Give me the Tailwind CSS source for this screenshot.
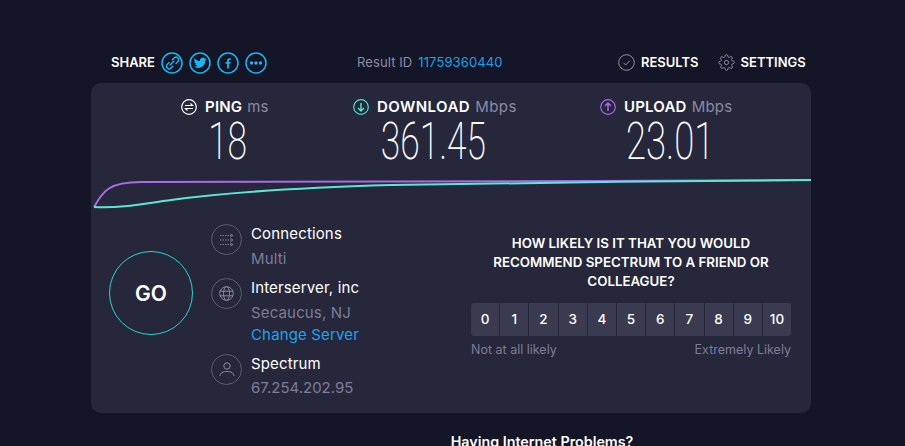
<!DOCTYPE html>
<html lang="en">
<head>
  <meta charset="UTF-8" />
  <meta name="viewport" content="width=device-width, initial-scale=1.0" />
  <title>Speedtest Result</title>
  <script src="https://cdn.jsdelivr.net/npm/@tailwindcss/browser@4"></script>
</head>
<body class="bg-[#141526] font-['Inter',sans-serif] text-white h-[446px] overflow-hidden">

  <main class="w-[720px] ml-[91px]">
    <!-- Top bar -->
    <div class="h-[83px] pt-[47px] flex items-start text-[13px]">
      <div class="w-[266px] pl-[20px] h-[31px] flex items-center">
        <span class="font-semibold mr-[6px]">SHARE</span>
        <div class="flex gap-[6px] text-[#1cb5ee]">
          <svg class="w-[22px] h-[22px]" viewBox="0 0 22 22" fill="none" stroke="currentColor" stroke-width="1.5"><circle cx="11" cy="11" r="10"/><path transform="translate(11 11) scale(1.2) translate(-11 -11)" d="M9.5 12.5l3-3M8.6 10.6l-1.6 1.6a2.2 2.2 0 0 0 3.1 3.1l1.6-1.6M11.3 8.300l1.6-1.6a2.2 2.2 0 0 1 3.1 3.1l-1.6 1.6" stroke-linecap="round" stroke-width="1.200"/></svg>
          <svg class="w-[22px] h-[22px]" viewBox="0 0 22 22" fill="none" stroke="currentColor" stroke-width="1.5"><circle cx="11" cy="11" r="10"/><path transform="translate(11 11) scale(1.2) translate(-11 -11)" stroke="none" fill="currentColor" d="M16.5 7.6c-.4.2-.8.3-1.3.4.5-.3.8-.7 1-1.2-.4.3-.9.4-1.4.5a2.2 2.2 0 0 0-3.8 2C9.200 9.200 7.600 8.400 6.500 7c-.6 1-.3 2.300.7 2.900-.4 0-.7-.1-1-.3 0 1.100.8 2 1.800 2.200-.3.1-.7.1-1 0 .3.900 1.100 1.500 2.100 1.500-.9.700-2.100 1-3.300.9 1 .6 2.100 1 3.400 1 4.100 0 6.400-3.400 6.300-6.500.4-.3.800-.7 1-1.100z"/></svg>
          <svg class="w-[22px] h-[22px]" viewBox="0 0 22 22" fill="none" stroke="currentColor" stroke-width="1.5"><circle cx="11" cy="11" r="10"/><path stroke="none" fill="currentColor" d="M11.900 16.500v-4.800h1.500l.2-1.800h-1.700V8.800c0-.5.200-.8.900-.8h.9V6.300c-.2 0-.7-.1-1.300-.1-1.400 0-2.300.8-2.300 2.400v1.300H8.600v1.800h1.500v4.800z"/></svg>
          <svg class="w-[22px] h-[22px]" viewBox="0 0 22 22" fill="none" stroke="currentColor" stroke-width="1.5"><circle cx="11" cy="11" r="10"/><g stroke="none" fill="currentColor"><circle cx="6.500" cy="11" r="1.700"/><circle cx="11" cy="11" r="1.700"/><circle cx="15.500" cy="11" r="1.700"/></g></svg>
        </div>
      </div>
      <div class="w-[261px] h-[31px] flex items-center text-[13px] tracking-[0.1px]">
        <span class="text-[#8a8ba6] mr-[6px]">Result ID</span>
        <span class="text-[#1da1e8]">11759360440</span>
      </div>
      <div class="h-[31px] flex items-center font-semibold text-[13px]">
        <svg class="w-[17px] h-[17px] mr-[6px] text-[#9293a8]" viewBox="0 0 17 17" fill="none" stroke="currentColor"><circle cx="8.500" cy="8.500" r="7.800"/><path d="M5.500 8.800l2.200 2.200 4-4.200"/></svg>
        <span class="mr-[19px]">RESULTS</span>
        <svg class="w-[17px] h-[17px] mr-[6px] text-[#9293a8]" viewBox="0 0 24 24" fill="none" stroke="currentColor" stroke-width="1.300"><circle cx="12" cy="12" r="3"/><path d="M19.400 15a1.650 1.650 0 0 0 .33 1.820l.06.06a2 2 0 1 1-2.830 2.830l-.06-.06a1.650 1.650 0 0 0-2.800 1.170V21a2 2 0 1 1-4 0v-.09a1.650 1.650 0 0 0-2.800-1.170l-.06.06a2 2 0 1 1-2.830-2.830l.06-.06a1.650 1.650 0 0 0-1.170-2.800H3a2 2 0 1 1 0-4h.09a1.650 1.650 0 0 0 1.170-2.800l-.06-.06a2 2 0 1 1 2.830-2.830l.06.06a1.650 1.650 0 0 0 2.800-1.170V3a2 2 0 1 1 4 0v.09a1.650 1.650 0 0 0 2.800 1.170l.06-.06a2 2 0 1 1 2.830 2.830l-.06.06a1.650 1.650 0 0 0 1.170 2.800H21a2 2 0 1 1 0 4h-.09a1.650 1.650 0 0 0-1.510 1z"/></svg>
        <span>SETTINGS</span>
      </div>
    </div>

    <!-- Result panel -->
    <section class="bg-[#26273b] rounded-[10px] h-[330px] overflow-hidden">
      <!-- Stats -->
      <div class="flex pl-[90px] pt-[14px] h-[92px]">
        <div class="w-[172px]">
          <div class="inline-flex flex-col items-center">
            <div class="flex items-center h-[18px] text-[15px] tracking-[0.2px]">
              <svg class="w-[16px] h-[16px] mr-[8px]" viewBox="0 0 16 16" fill="none" stroke="#fff" stroke-width="1.200"><circle cx="8" cy="8" r="7.300"/><path d="M4 6.500h7.500L9.500 4.500M12 9.500H4.500l2 2"/></svg>
              <span class="font-semibold">PING</span>
              <span class="text-[#8a8ba6] ml-[5px]">ms</span>
            </div>
            <div class="font-['Roboto',sans-serif] font-extralight text-[52px] leading-[52px] scale-x-[0.68] ml-[6px]">18</div>
          </div>
        </div>
        <div class="w-[247px]">
          <div class="inline-flex flex-col items-center">
            <div class="flex items-center h-[18px] text-[15px] tracking-[0.45px]">
              <svg class="w-[16px] h-[16px] mr-[8px]" viewBox="0 0 16 16" fill="none" stroke="#4fe0d2" stroke-width="1.200"><circle cx="8" cy="8" r="7.300"/><path d="M8 4v8M5 9l3 3 3-3" stroke-width="1.500"/></svg>
              <span class="font-semibold">DOWNLOAD</span>
              <span class="text-[#8a8ba6] ml-[5px]">Mbps</span>
            </div>
            <div class="font-['Roboto',sans-serif] font-extralight text-[52px] leading-[52px] scale-x-[0.68] ml-[-32px] mr-[-28px]">361.45</div>
          </div>
        </div>
        <div>
          <div class="inline-flex flex-col items-center">
            <div class="flex items-center h-[18px] text-[15px] tracking-[0.2px]">
              <svg class="w-[16px] h-[16px] mr-[8px]" viewBox="0 0 16 16" fill="none" stroke="#a96be8" stroke-width="1.200"><circle cx="8" cy="8" r="7.300"/><path d="M8 12V4M5 7l3-3 3 3" stroke-width="1.500"/></svg>
              <span class="font-semibold">UPLOAD</span>
              <span class="text-[#8a8ba6] ml-[5px]">Mbps</span>
            </div>
            <div class="font-['Roboto',sans-serif] font-extralight text-[52px] leading-[52px] scale-x-[0.7] mr-[-30px] ml-[-22px]">23.01</div>
          </div>
        </div>
      </div>

      <!-- Speed graph -->
      <svg class="block w-[720px] h-[40px]" viewBox="0 0 720 40" fill="none" stroke-width="2">
        <path stroke="#a96be8" d="M3 32C12 16 18 7 50 7C120 6 300 7 500 6L720 5"/>
        <path stroke="#5ce6da" d="M3 32C30 33 45 30 80 25C130 18 200 13 300 10C400 8 600 6 720 5"/>
      </svg>

      <!-- Bottom -->
      <div class="flex">
        <!-- GO -->
        <div class="w-[120px] pl-[18px] pt-[36px]">
          <div class="w-[84px] h-[84px] pt-[2px] rounded-full border border-[#2ad4cf] flex items-center justify-center text-[21px] font-semibold">GO</div>
        </div>
        <!-- Server info -->
        <div class="w-[240px] pt-[9px] text-[15px] tracking-[0.15px]">
          <div class="flex h-[54px]">
            <div class="w-[31px] h-[31px] rounded-full border border-[#5d5e72] flex items-center justify-center mr-[9px]">
              <svg class="w-[15px] h-[14px]" viewBox="0 0 15 14" fill="none" stroke="#8a8ba6" stroke-width="0.800"><path stroke-dasharray="1.500 1" d="M1 2.500h12M1 7h12M1 11.500h12"/><path d="M11.500 1l2.500 1.500-2.500 1.500M11.500 5.500L14 7l-2.500 1.500M11.500 10l2.500 1.500-2.500 1.500"/></svg>
            </div>
            <div>
              <div class="leading-[20px]">Connections</div>
              <div class="text-[#7c7d98] leading-[20px] mt-[5px]">Multi</div>
            </div>
          </div>
          <div class="flex h-[76px]">
            <div class="w-[31px] h-[31px] rounded-full border border-[#5d5e72] flex items-center justify-center mr-[9px]">
              <svg class="w-[15px] h-[15px]" viewBox="0 0 15 15" fill="none" stroke="#8a8ba6" stroke-width="1"><circle cx="7.500" cy="7.500" r="6.800"/><ellipse cx="7.500" cy="7.500" rx="3" ry="6.800"/><path d="M1 5.200h13M1 9.800h13"/></svg>
            </div>
            <div>
              <div class="leading-[20px]">Interserver, inc</div>
              <div class="text-[#7c7d98] leading-[20px] mt-[5px]">Secaucus, NJ</div>
              <div class="text-[#1da1f2] leading-[20px] mt-[2px]">Change Server</div>
            </div>
          </div>
          <div class="flex">
            <div class="w-[31px] h-[31px] rounded-full border border-[#5d5e72] flex items-center justify-center mr-[9px]">
              <svg class="w-[16px] h-[15px]" viewBox="0 0 16 15" fill="none" stroke="#8a8ba6" stroke-width="1"><circle cx="8" cy="4" r="3.200"/><path d="M1 14c0-3 3-4.500 7-4.500s7 1.500 7 4.500"/></svg>
            </div>
            <div>
              <div class="leading-[20px]">Spectrum</div>
              <div class="text-[#7c7d98] leading-[20px] mt-[4px] tracking-[0px]">67.254.202.95</div>
            </div>
          </div>
        </div>
        <!-- Survey -->
        <div class="w-[320px] ml-[20px] pt-[19px]">
          <p class="text-center text-[13.300px] font-semibold leading-[19px] whitespace-nowrap">HOW LIKELY IS IT THAT YOU WOULD<br>RECOMMEND SPECTRUM TO A FRIEND OR<br>COLLEAGUE?</p>
          <div class="flex gap-[1px] mt-[12px] rounded-[3px] overflow-hidden text-[13.500px] font-medium">
            <div class="flex-1 h-[33px] bg-[#3a3b50] flex items-center justify-center">0</div>
            <div class="flex-1 h-[33px] bg-[#3a3b50] flex items-center justify-center">1</div>
            <div class="flex-1 h-[33px] bg-[#3a3b50] flex items-center justify-center">2</div>
            <div class="flex-1 h-[33px] bg-[#3a3b50] flex items-center justify-center">3</div>
            <div class="flex-1 h-[33px] bg-[#3a3b50] flex items-center justify-center">4</div>
            <div class="flex-1 h-[33px] bg-[#3a3b50] flex items-center justify-center">5</div>
            <div class="flex-1 h-[33px] bg-[#3a3b50] flex items-center justify-center">6</div>
            <div class="flex-1 h-[33px] bg-[#3a3b50] flex items-center justify-center">7</div>
            <div class="flex-1 h-[33px] bg-[#3a3b50] flex items-center justify-center">8</div>
            <div class="flex-1 h-[33px] bg-[#3a3b50] flex items-center justify-center">9</div>
            <div class="flex-1 h-[33px] bg-[#3a3b50] flex items-center justify-center">10</div>
          </div>
          <div class="flex justify-between mt-[7px] text-[12.500px] leading-[14px] text-[#7c7d98]">
            <span>Not at all likely</span>
            <span>Extremely Likely</span>
          </div>
        </div>
      </div>
    </section>

    <p class="text-center text-[14.300px] font-semibold mt-[20px] pl-[182px] leading-[18px] whitespace-nowrap">Having Internet Problems?</p>
  </main>

</body>
</html>
